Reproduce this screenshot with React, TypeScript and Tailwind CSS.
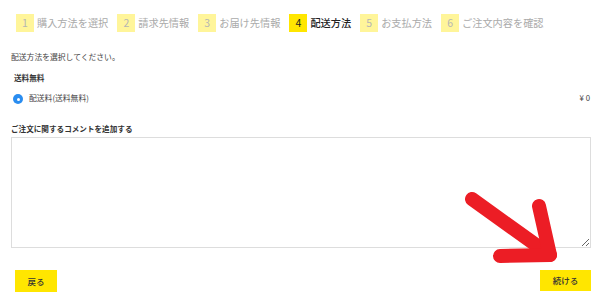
import React from "react";

const steps = [
  { n: "1", label: "購入方法を選択" },
  { n: "2", label: "請求先情報" },
  { n: "3", label: "お届け先情報" },
  { n: "4", label: "配送方法", active: true },
  { n: "5", label: "お支払方法" },
  { n: "6", label: "ご注文内容を確認" },
];

export default function App() {
  return (
    <div
      className="relative w-[610px] h-[307px] bg-white overflow-hidden text-[#333]"
      style={{ fontFamily: '"Noto Sans CJK JP", "Noto Sans", sans-serif' }}
    >
      <div className="flex items-center pl-[16px] pt-[14px] h-[32px]">
        {steps.map((s) => (
          <div key={s.n} className="flex items-center mr-[9px]">
            <div
              className={
                s.active
                  ? "w-[18px] h-[18px] bg-[#ffe600] text-[#222] flex items-center justify-center text-[10.5px] leading-none"
                  : "w-[18px] h-[18px] bg-[#fff59a] text-[#b5b5b5] flex items-center justify-center text-[10.5px] leading-none"
              }
            >
              {s.n}
            </div>
            <span
              className={
                s.active
                  ? "ml-[3px] text-[10.2px] leading-none text-[#222] font-medium"
                  : "ml-[3px] text-[10.2px] leading-none text-[#aaaaaa]"
              }
            >
              {s.label}
            </span>
          </div>
        ))}
      </div>

      <div className="px-[11px] w-[602px]">
        <p className="mt-[20px] text-[7.8px] leading-[10px] text-[#444]">配送方法を選択してください。</p>
        <p className="mt-[11px] ml-[3px] text-[7.6px] leading-[10px] font-bold text-[#333]">送料無料</p>
        <div className="mt-[8px] flex items-center justify-between">
          <div className="flex items-center">
            <span className="ml-[2px] w-[10px] h-[10px] rounded-full bg-[#2a8df0] flex items-center justify-center mt-[3px]">
              <span className="w-[3px] h-[3px] rounded-full bg-white" />
            </span>
            <span className="ml-[6px] text-[7.8px] leading-[10px] text-[#444]">配送料(送料無料)</span>
          </div>
          <span className="text-[7.8px] leading-[10px] text-[#444] mr-[1px]">¥ 0</span>
        </div>
        <p className="mt-[20px] text-[7.6px] leading-[10px] font-bold text-[#333]">ご注文に関するコメントを追加する</p>
        <textarea className="mt-[3px] block w-[580px] h-[111px] border border-[#dddddd] bg-white outline-none" />
        <div className="mt-[22px] flex justify-between">
          <button className="ml-[4px] w-[42px] h-[22px] bg-[#ffe600] text-[8.5px] text-[#333] font-medium flex items-center justify-center">
            戻る
          </button>
          <button className="w-[51px] h-[21px] bg-[#ffe600] text-[8.5px] text-[#333] font-medium flex items-center justify-center">
            続ける
          </button>
        </div>
      </div>

      <svg
        className="absolute left-0 top-0 pointer-events-none"
        width="610"
        height="307"
        viewBox="0 0 610 307"
      >
        <g stroke="#ec1d25" strokeWidth="14" strokeLinecap="round" strokeLinejoin="round" fill="none">
          <path d="M472 199 L550 255" />
          <path d="M539 206 L550 255 L500 256" />
        </g>
      </svg>
    </div>
  );
}
